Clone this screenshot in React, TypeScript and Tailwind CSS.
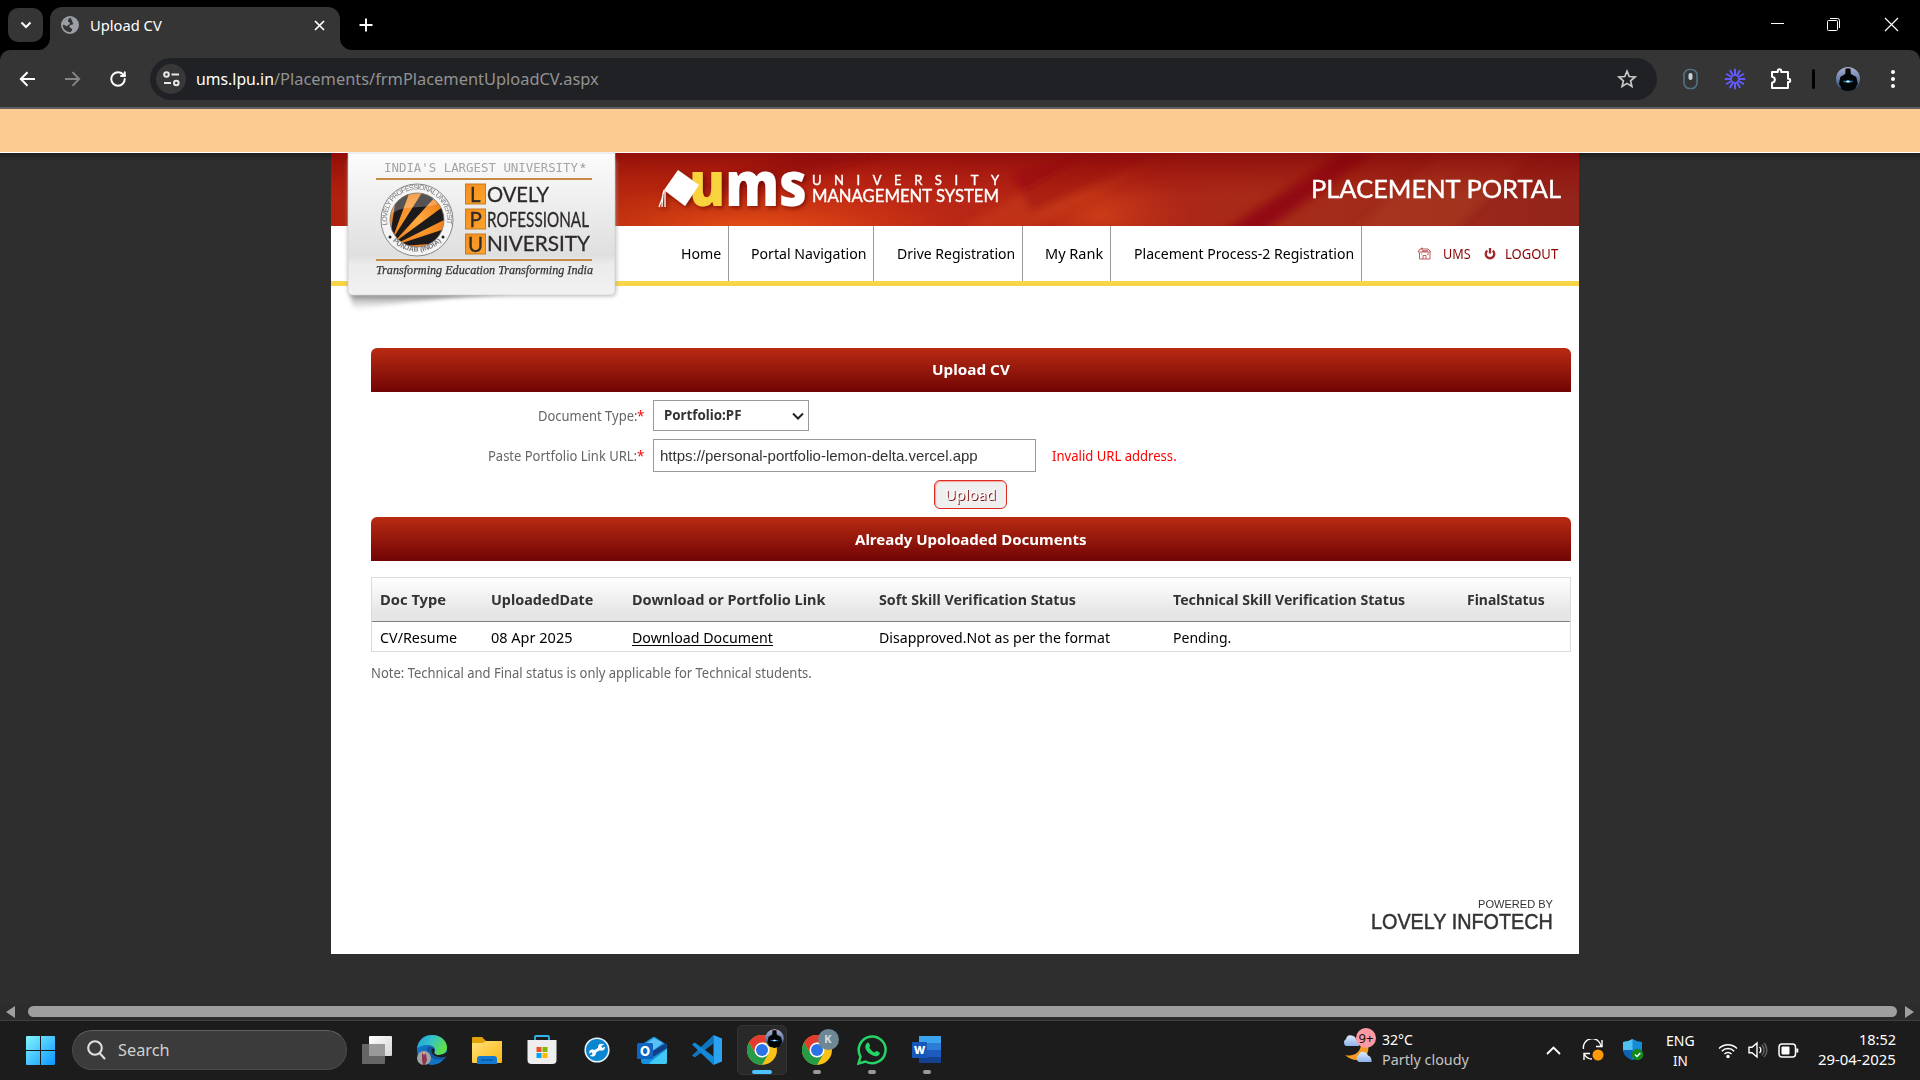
import { useLayoutEffect, useRef, useState } from "react";
import type { ReactNode } from "react";
import { RotateCw } from "lucide-react";

type FitProps = { w: number; className?: string; children: ReactNode };

/* One line of text, condensed or widened to an exact width. */
function Fit({ w, className = "", children }: FitProps) {
  const ref = useRef<HTMLSpanElement>(null);
  const [scale, setScale] = useState(1);
  useLayoutEffect(() => {
    if (ref.current) setScale(w / ref.current.offsetWidth);
  }, [w]);
  return (
    <span className={`block shrink-0 whitespace-nowrap ${className}`} style={{ width: w }}>
      <span ref={ref} className="inline-block origin-left" style={{ transform: `scaleX(${scale})` }}>
        {children}
      </span>
    </span>
  );
}

function Avatar({ size }: { size: number }) {
  return (
    <svg width={size} height={size} viewBox="0 0 24 24">
      <defs>
        <clipPath id="av"><circle cx="12" cy="12" r="12" /></clipPath>
        <linearGradient id="avg" x1="0" y1="0" x2="0" y2="1">
          <stop offset="0" stopColor="#a9b4d4" />
          <stop offset=".5" stopColor="#6a7fa8" />
          <stop offset="1" stopColor="#16406c" />
        </linearGradient>
      </defs>
      <g clipPath="url(#av)">
        <rect width="24" height="24" fill="url(#avg)" />
        <path d="M9.500 1.500h5l.3 5.500 5.500 3 1.500 7-2 3v4H5v-4l-2-3 1.300-7L9.200 7Z" fill="#030507" />
        <path d="M9 2l1 2M15 2l-1 2" stroke="#a33" strokeWidth=".7" />
        <ellipse cx="12" cy="14.500" rx="5" ry="1" fill="#1b7fc4" />
        <ellipse cx="12" cy="14.500" rx="1.800" ry="1" fill="#dff6ff" />
      </g>
    </svg>
  );
}

function TabStrip() {
  return (
    <div className="flex h-[50px] items-start bg-black">
      <div className="ml-2 mt-2 flex h-[34px] w-[35px] items-center justify-center rounded-[10px] bg-[#353535]">
        <svg width="12" height="8" viewBox="0 0 12 8" fill="none" stroke="#fff" strokeWidth="2"><path d="M1.500 1.500 6 6l4.500-4.500" /></svg>
      </div>
      <div className="relative ml-[7px] mt-[7px] flex h-[43px] w-[290px] items-center rounded-t-[12px] bg-[#353535] pb-[7px]">
        <svg className="absolute -left-3 bottom-0" width="12" height="12"><path d="M12 0v12H0A12 12 0 0 0 12 0Z" fill="#353535" /></svg>
        <svg className="absolute -right-3 bottom-0" width="12" height="12"><path d="M0 0v12h12A12 12 0 0 1 0 0Z" fill="#353535" /></svg>
        <svg className="ml-[11px]" width="18" height="18" viewBox="0 0 18 18">
          <circle cx="9" cy="9" r="8.100" fill="#353535" stroke="#9aa0a6" strokeWidth="1.800" />
          <path d="M1 8.500C2 5 5 2 9.500 1.200 8 3 6.500 3.300 7 5.200c.3 1.300 2.200.7 2 2.300-.2 1.500-2 1-2.500 2.200C5.800 11.200 4 8.500 1 8.500Z" fill="#9aa0a6" />
          <path d="M10 2c4 0 7 3 7 7s-2.800 7-7 7.800c-.5-1.600 1.500-2 1.200-3.600-.3-1.400-3-1-2.700-3 .2-1.700 2.600-1 3.500-2 .9-1.200-1-1.600-.7-3C11.500 4 9.500 3.500 10 2Z" fill="#9aa0a6" />
        </svg>
        <Fit w={72} className="ml-[11px] font-['Noto_Sans'] text-[14.5px] leading-5 text-white">Upload CV</Fit>
        <svg className="ml-[152px]" width="11" height="11" viewBox="0 0 11 11" stroke="#fff" strokeWidth="1.700"><path d="m1 1 9 9M10 1l-9 9" /></svg>
      </div>
      <svg className="ml-[19px] mt-[18px]" width="14" height="14" viewBox="0 0 14 14" stroke="#fff" strokeWidth="1.900"><path d="M7 .5v13M.5 7h13" /></svg>
      <div className="ml-auto mr-[21px] mt-[17px] flex items-center text-white">
        <svg width="15" height="15" stroke="#fff" className="mr-[41px]"><path d="M1 6.500h13" /></svg>
        <svg width="15" height="15" stroke="#fff" fill="none" className="mr-[43px]"><rect x="1.500" y="3.500" width="10" height="10" rx="1" /><path d="M4 1.500h7.500a2 2 0 0 1 2 2V11" /></svg>
        <svg width="15" height="15" stroke="#fff" strokeWidth="1.200"><path d="m1 1 13 13M14 1 1 14" /></svg>
      </div>
    </div>
  );
}

const RAYS = [0, 30, 60, 90, 120, 150, 180, 210, 240, 270, 300, 330];

function Toolbar() {
  return (
    <div className="bg-black">
      <div className="flex h-[59px] items-center rounded-t-[10px] border-b-2 border-[#5f5f63] bg-[#353535]">
        <svg className="ml-[19px]" width="17" height="16" viewBox="0 0 17 16" fill="none" stroke="#fff" strokeWidth="2"><path d="M16 8H2.500M8.500 1.200 1.800 8l6.700 6.800" /></svg>
        <svg className="ml-7" width="17" height="16" viewBox="0 0 17 16" fill="none" stroke="#868686" strokeWidth="1.900"><path d="M1 8h13.500M8.500 1.200 15.200 8l-6.700 6.800" /></svg>
        <RotateCw className="ml-[28px] text-white" size={18} strokeWidth={2.600} />
        <div className="ml-[23px] flex h-[42px] w-[1507px] items-center rounded-full bg-[#202124]">
          <div className="ml-[6px] flex h-[30px] w-[30px] items-center justify-center rounded-full bg-[#383838]">
            <svg width="17" height="16" viewBox="0 0 17 16" fill="none" stroke="#e8e8e8" strokeWidth="2">
              <circle cx="3.500" cy="3.500" r="2.300" /><path d="M8.500 3.500H16M1 12H8" /><circle cx="13.300" cy="12" r="2.300" />
            </svg>
          </div>
          <Fit w={78} className="ml-[10px] font-['Noto_Sans'] text-[17px] leading-[30px] text-white">ums.lpu.in</Fit>
          <Fit w={325} className="font-['Noto_Sans'] text-[17px] leading-[30px] text-[#929292]">/Placements/frmPlacementUploadCV.aspx</Fit>
          <svg className="ml-auto mr-5" width="20" height="20" viewBox="0 0 20 20" fill="none" stroke="#c7c7c7" strokeWidth="1.700"><path d="m10 2.200 2.200 5.300 5.800.5-4.400 3.800 1.300 5.600-4.900-3-4.900 3 1.300-5.600L2 8l5.800-.5Z" /></svg>
        </div>
        <svg className="ml-[26px]" width="15" height="22" viewBox="0 0 15 22"><rect x="1" y="1.500" width="13" height="19" rx="5.500" fill="none" stroke="#4f7383" strokeWidth="1.600" /><rect x="5.500" y="5" width="4" height="7" rx="2" fill="#c5d3da" /></svg>
        <svg className="ml-[26px]" width="22" height="22" viewBox="-11 -11 22 22" stroke="#635bff" strokeWidth="2" strokeLinecap="round">
          {RAYS.map((a) => <path key={a} d="M0-4V-9.500" transform={`rotate(${a})`} />)}
          <circle r="4" fill="none" strokeWidth="1.200" />
        </svg>
        <svg className="ml-[23px]" width="23" height="24" viewBox="0 0 23 24" fill="none" stroke="#fff" strokeWidth="2" strokeLinejoin="round"><path d="M3 5h5.800V4a1.700 1.700 0 0 1 3.400 0v1H19v6.800h.6a1.600 1.600 0 0 1 0 3.200H19v6H3v-5.300c3.800-.5 3.800-5.400 0-5.900Z" /></svg>
        <div className="ml-[20px] h-5 w-[3px] rounded bg-black" />
        <div className="ml-[21px]"><Avatar size={24} /></div>
        <svg className="ml-[30px]" width="6" height="20" fill="#fff"><circle cx="3" cy="3" r="2" /><circle cx="3" cy="10" r="2" /><circle cx="3" cy="17" r="2" /></svg>
      </div>
    </div>
  );
}

/* Glossy university seal, slogan and name plate. */
function LogoCard() {
  return (
    <svg width="290" height="162" viewBox="0 0 290 162" className="absolute left-[10px] top-0 z-10 overflow-visible">
      <defs>
        <linearGradient id="card" x1="0" y1="0" x2="0" y2="1">
          <stop offset="0" stopColor="#fdfcfd" /><stop offset=".72" stopColor="#e0dfe0" /><stop offset=".78" stopColor="#ebebeb" /><stop offset="1" stopColor="#f1f1f1" />
        </linearGradient>
        <linearGradient id="shade" x1="0" y1="0" x2="0" y2="1"><stop offset="0" stopColor="#777" /><stop offset="1" stopColor="#ddd" stopOpacity=".2" /></linearGradient>
        <radialGradient id="ball"><stop offset="0" stopColor="#ffae45" /><stop offset="1" stopColor="#ef7911" /></radialGradient>
        <linearGradient id="sq" x1="0" y1="0" x2="1" y2="1"><stop offset="0" stopColor="#f58d1e" /><stop offset="1" stopColor="#fba52b" /></linearGradient>
        <clipPath id="ballc"><circle cx="76" cy="67" r="27" /></clipPath>
        <path id="sealTop" d="M46.500 72A30 30 0 1 1 105.500 72" />
        <path id="sealBot" d="M49 85A33.500 33.500 0 0 0 103 85" />
        <filter id="soft"><feGaussianBlur stdDeviation="2" /></filter>
      </defs>
      <path d="M10 140H170Q60 148 15 157Q10 155 10 140Z" fill="url(#shade)" filter="url(#soft)" />
      <path d="M7 7V138q0 5 5 5H270q5 0 5-5V7Z" fill="#999" opacity=".7" filter="url(#soft)" />
      <path d="M7 0V137q0 5 5 5H269q5 0 5-5V0Z" fill="url(#card)" stroke="#ccc" strokeWidth=".6" />
      <text x="43" y="18.500" fontFamily="DejaVu Sans Mono" fontWeight="200" fontSize="11.500" fill="#a5a5a5" textLength="194" lengthAdjust="spacingAndGlyphs">INDIA'S LARGEST UNIVERSITY</text>
      <text x="239" y="20" fontFamily="Liberation Sans" fontSize="15" fill="#999">*</text>
      <path d="M35 26H251M35 107H251" stroke="#c98a45" strokeWidth="2" />
      <circle cx="76" cy="67" r="36" fill="#f4f4f4" stroke="#888" strokeWidth="1" />
      <g clipPath="url(#ballc)">
        <rect x="45" y="36" width="62" height="62" fill="url(#ball)" />
        <g fill="#1d1a1b">
          <path d="M49 84 56 38h13L52 84Z" />
          <path d="M51 87 82 38l13 5L54 88Z" />
          <path d="M54 89 103 53l4 12L57 90Z" />
          <path d="M58 91 107 75l-7 15L62 93Z" />
        </g>
        <path d="M46 67C60 45 85 62 105 46V36H46Z" fill="#fff" opacity=".25" />
      </g>
      <circle cx="76" cy="67" r="27" fill="none" stroke="#777" strokeWidth=".8" />
      <g fontFamily="Liberation Sans" fill="#777" fontSize="7">
        <text><textPath href="#sealTop" textLength="108">LOVELY PROFESSIONAL UNIVERSITY</textPath></text>
        <text fontWeight="bold"><textPath href="#sealBot" startOffset="4">PUNJAB (INDIA)</textPath></text>
      </g>
      <circle cx="49" cy="84" r="1.500" fill="#222" /><circle cx="102" cy="84" r="1.500" fill="#222" />
      {[31, 56, 81].map((y) => <rect key={y} x="124.500" y={y} width="20" height="20" fill="url(#sq)" stroke="#c77b23" />)}
      <g fontFamily="Lato" fontSize="20.500" fill="#2e2a29" stroke="#2e2a29" strokeWidth=".3">
        <text x="129" y="49">L</text><text x="128.500" y="74">P</text><text x="127" y="98.500">U</text>
        <text x="146" y="49" textLength="62" lengthAdjust="spacingAndGlyphs">OVELY</text>
        <text x="146" y="73.500" textLength="102" lengthAdjust="spacingAndGlyphs">ROFESSIONAL</text>
        <text x="146" y="98" textLength="103" lengthAdjust="spacingAndGlyphs">NIVERSITY</text>
      </g>
      <text x="35" y="121" fontFamily="Liberation Serif" fontStyle="italic" fontSize="13" fill="#333" stroke="#333" strokeWidth=".25" textLength="217" lengthAdjust="spacingAndGlyphs">Transforming Education Transforming India</text>
    </svg>
  );
}

function Banner() {
  return (
    <svg width="1248" height="73" viewBox="0 0 1248 73" className="block overflow-visible">
      <defs>
        <clipPath id="bclip"><rect width="1248" height="73" /></clipPath>
        <linearGradient id="bn"><stop offset="0" stopColor="#b0210e" /><stop offset=".25" stopColor="#b8290f" /><stop offset=".42" stopColor="#c02915" /><stop offset=".6" stopColor="#b02417" /><stop offset=".8" stopColor="#a42c1a" /><stop offset="1" stopColor="#92241b" /></linearGradient>
        <linearGradient id="bd" x1="0" y1="0" x2="0" y2="1"><stop offset="0" stopColor="#7d0206" stopOpacity=".65" /><stop offset=".6" stopColor="#a01008" stopOpacity="0" /></linearGradient>
        <radialGradient id="glow"><stop offset="0" stopColor="#ee5718" stopOpacity=".9" /><stop offset="1" stopColor="#d8430f" stopOpacity="0" /></radialGradient>
        <filter id="bb"><feGaussianBlur stdDeviation="5" /></filter>
        <filter id="ts" x="-10%" y="-10%" width="120%" height="130%"><feDropShadow dx="2" dy="2" stdDeviation="2" floodColor="#500" floodOpacity=".6" /></filter>
      </defs>
      <g clipPath="url(#bclip)">
        <rect width="1248" height="73" fill="url(#bn)" />
        <ellipse cx="420" cy="78" rx="210" ry="46" fill="url(#glow)" />
        <ellipse cx="770" cy="62" rx="90" ry="50" fill="url(#glow)" opacity=".5" />
        <g filter="url(#bb)">
          <path d="M330 40 470 0h90L420 40Z" fill="#980b0c" opacity=".6" />
          <path d="M620 80 760 0h80L690 80Z" fill="#d34a22" opacity=".35" />
          <path d="M890 80 1010 0h34L930 80Z" fill="#8b0716" opacity=".75" />
          <path d="M680 20 760 0h80L700 60Z" fill="#950c0f" opacity=".5" />
          <path d="M1020 80 1110 0h90L1120 80Z" fill="#b04325" opacity=".45" />
        </g>
        <rect width="1248" height="73" fill="url(#bd)" />
      </g>
      <g filter="url(#ts)">
        <text x="358" y="53" fontFamily="Open Sans" fontWeight="800" fontSize="62" fill="#fff" textLength="118" lengthAdjust="spacingAndGlyphs"><tspan fill="#f8d33e">u</tspan>ms</text>
        <path d="m347 17 21 15-14 21-21-16Z" fill="#fff" />
        <path d="m333 37-2 9-3 8M334 38l0 16M332 40l-1 14" stroke="#fff" strokeWidth="1.200" fill="none" />
      </g>
      <g fontFamily="Lato" fill="#fff" stroke="#fff" strokeWidth=".4">
        <text x="481" y="32" fontSize="13" textLength="187">UNIVERSITY</text>
        <text x="481" y="49" fontSize="17" textLength="187" lengthAdjust="spacingAndGlyphs">MANAGEMENT SYSTEM</text>
        <text x="980" y="45" fontSize="24.500" textLength="250" lengthAdjust="spacingAndGlyphs">PLACEMENT PORTAL</text>
      </g>
    </svg>
  );
}

const NAV = [
  { label: "Home", w: 40, box: "w-[48px] ml-[350px]" },
  { label: "Portal Navigation", w: 115, box: "w-[145px]" },
  { label: "Drive Registration", w: 118, box: "w-[149px]" },
  { label: "My Rank", w: 58, box: "w-[88px]" },
  { label: "Placement Process-2 Registration", w: 220, box: "w-[251px]" },
];

function Nav() {
  return (
    <nav className="flex h-[60px] items-stretch border-b-[5px] border-[#f8d648] bg-white font-['Noto_Sans'] text-[14.5px] leading-5 text-black">
      {NAV.map((n) => (
        <div key={n.label} className={`flex items-center justify-end border-r border-[#999] pb-[2px] pr-[7px] ${n.box}`}>
          <Fit w={n.w}>{n.label}</Fit>
        </div>
      ))}
      <div className="ml-[55px] flex items-center text-[#8b0000]">
        <svg width="15" height="13" viewBox="0 0 15 13" fill="none" stroke="#bf5a5e"><path d="M1 5 3 2h8l3 3H1ZM2.500 5.500V12H13V5.500M6 12V8.500h3V12M4 7h1M10 7h2" /><path d="M4 1.500h2M5 4h6" strokeWidth="1.500" /></svg>
        <Fit w={28} className="ml-[11px] text-[14px]">UMS</Fit>
        <svg className="ml-[13px]" width="12" height="12" viewBox="0 0 12 12" fill="none" stroke="#a3282b" strokeWidth="2.300"><path d="M3.300 2.600a4.300 4.300 0 1 0 5.400 0M6 0v5.500" /></svg>
        <Fit w={53} className="ml-[9px] text-[14px]">LOGOUT</Fit>
      </div>
    </nav>
  );
}

function SectionTitle({ w, className = "", children }: FitProps) {
  return (
    <div className={`flex h-11 items-center justify-center rounded-t-[6px] bg-linear-to-b from-[#b92a12] to-[#720406] font-['Noto_Sans'] text-[14.5px] font-bold leading-5 text-white ${className}`}>
      <Fit w={w}>{children}</Fit>
    </div>
  );
}

function UploadForm() {
  return (
    <div className="h-[125px] pt-2 font-['Noto_Sans'] text-[13.5px] leading-5 text-[#666]">
      <div className="flex h-[31px] items-center">
        <Fit w={99} className="ml-[167px]">Document Type:</Fit>
        <Fit w={7} className="text-[#f00]">*</Fit>
        <div className="ml-[9px] flex h-[31px] w-[156px] items-center border border-[#999] bg-white pl-[10px] font-bold text-[#333]">
          <Fit w={77} className="pb-[2px]">Portfolio:PF</Fit>
          <svg className="ml-[51px]" width="12" height="8" viewBox="0 0 12 8" fill="none" stroke="#222" strokeWidth="2"><path d="M1 1.500 6 6.500l5-5" /></svg>
        </div>
      </div>
      <div className="mt-2 flex h-[33px] items-center">
        <Fit w={149} className="ml-[117px]">Paste Portfolio Link URL:</Fit>
        <Fit w={7} className="text-[#f00]">*</Fit>
        <div className="ml-[9px] flex h-[33px] w-[383px] items-center border border-[#999] bg-white pl-[6px] font-['Liberation_Sans'] text-[15px] text-[#333]">
          <Fit w={318}>https://personal-portfolio-lemon-delta.vercel.app</Fit>
        </div>
        <Fit w={125} className="ml-4 text-[#f00]">Invalid URL address.</Fit>
      </div>
      <div className="mt-2 flex justify-center pr-px">
        <button className="flex h-[29px] w-[73px] items-center justify-center rounded-[6px] border border-[#dc2a1e] bg-[#efefef] pb-[2px] text-[15px] leading-5 text-white shadow-[inset_1px_1px_1px_#f5a59e] [text-shadow:1px_1px_0_#7d0a0a]">
          <Fit w={51}>Upload</Fit>
        </button>
      </div>
    </div>
  );
}

function Documents() {
  return (
    <div className="mt-4 border border-[#dcdcdc] font-['Noto_Sans'] text-[14.5px] leading-5 text-black">
      <div className="grid h-[44px] grid-cols-[111px_141px_247px_293.500px_294.500px_1fr] items-center border-b border-[#808080] bg-linear-to-b from-white to-[#e6e6e6] to-80% pb-px pl-2 font-bold text-[#333]">
        <Fit w={66}>Doc Type</Fit>
        <Fit w={102}>UploadedDate</Fit>
        <Fit w={193}>Download or Portfolio Link</Fit>
        <Fit w={197}>Soft Skill Verification Status</Fit>
        <Fit w={232}>Technical Skill Verification Status</Fit>
        <Fit w={78}>FinalStatus</Fit>
      </div>
      <div className="grid h-[29px] grid-cols-[111px_141px_247px_293.500px_294.500px_1fr] items-center bg-white pl-2">
        <Fit w={77}>CV/Resume</Fit>
        <Fit w={81}>08 Apr 2025</Fit>
        <Fit w={141}><u className="underline-offset-2">Download Document</u></Fit>
        <Fit w={231}>Disapproved.Not as per the format</Fit>
        <Fit w={58}>Pending.</Fit>
      </div>
    </div>
  );
}

function Chrome() {
  return (
    <svg width="30" height="30" viewBox="-15 -15 30 30">
      <circle r="15" fill="#fbc116" />
      <path d="M-13-7.500A15 15 0 0 1 13-7.500H0L-6.500 3.750Z" fill="#e33b2e" />
      <path d="M-13-7.500-6.500 3.750Q-3 8 2 7.200L0 15A15 15 0 0 1-13-7.500Z" fill="#269b48" />
      <path d="M6.500 3.750 0 15l-3-8Z" fill="#269b48" />
      <circle r="7.500" fill="#fff" /><circle r="6" fill="#2b74e8" />
    </svg>
  );
}

function Slot({ children, dot = false }: { children: ReactNode; dot?: boolean }) {
  return (
    <div className="relative flex h-[50px] w-[55px] items-center justify-center">
      {children}
      {dot && <span className="absolute bottom-[1px] h-[4px] w-2 rounded-full bg-[#9a9a9a]" />}
    </div>
  );
}

function TaskIcons() {
  return (
    <div className="ml-[2.500px] flex">
      <Slot>
        <svg width="30" height="28" viewBox="0 0 30 28"><defs><linearGradient id="tv" x1="0" y1="0" x2="1" y2="1"><stop offset="0" stopColor="#fff" /><stop offset="1" stopColor="#d5d5d5" /></linearGradient></defs><rect y="8" width="23" height="20" rx="1" fill="#666" /><rect x="7" width="23" height="20" rx="1" fill="url(#tv)" /><path d="M7 8h16v12H7Z" fill="#999" /></svg>
      </Slot>
      <Slot>
        <svg width="30" height="30" viewBox="0 0 30 30">
          <defs>
            <linearGradient id="ed" x1="0" y1="0" x2="1" y2=".4"><stop offset="0" stopColor="#1b9de2" /><stop offset=".5" stopColor="#35c1c8" /><stop offset="1" stopColor="#5fe04a" /></linearGradient>
          </defs>
          <circle cx="15" cy="15" r="15" fill="#1273c4" />
          <path d="M0 14C1 4 8 0 15 0c9 0 15 6 15 12.500 0 5-4 7.500-8.500 7.500-3 0-5-1-4-3 2-3-1-7-6-7C5 10 1 12 0 14Z" fill="url(#ed)" />
          <path d="M10 13c3-3 7-1 7.500 2-1.500 3 .5 5 4 5 3 0 6-1 8-3v4l-2 3c-8 2-18-1-17.500-11Z" fill="#14559c" />
          <path d="M14.500 15c.5-2 3-2 3.200 0-1.500 3 .5 5 4 5 3 0 6-1 8.300-3v4c-7 3-16 0-15.500-6Z" fill="#1c1c1c" />
          <circle cx="7" cy="23" r="7" fill="#a4a5a2" /><path d="M5 18q3-3 4 1l1 6-2 5H6l-1-5Z" fill="#8f3557" /><circle cx="7" cy="18" r="1.600" fill="#d8a28c" />
        </svg>
      </Slot>
      <Slot>
        <svg width="30" height="27" viewBox="0 0 30 27"><defs><linearGradient id="fo" x1="0" y1="0" x2="1" y2="1"><stop offset="0" stopColor="#ffe07a" /><stop offset="1" stopColor="#fbb812" /></linearGradient></defs><path d="M0 1q0-1 1-1h9l4 4h15q1 0 1 1v10H0Z" fill="#dfa008" /><path d="M0 6h11l3-2h16v21q0 1-1 1H1q-1 0-1-1Z" fill="url(#fo)" /><path d="M5 27v-5q0-3 3-3h14q3 0 3 3v5Z" fill="#1379d1" /><path d="M9 23h12" stroke="#0a4a90" /></svg>
      </Slot>
      <Slot>
        <svg width="30" height="30" viewBox="0 0 30 30"><path d="M8 6V2q0-1 1-1h12q1 0 1 1v4" fill="none" stroke="#30b5e8" strokeWidth="1.800" /><path d="M.5 5h29v20q0 4-4 4h-21q-4 0-4-4Z" fill="#eee" /><path d="M9.500 12h5v5h-5Z" fill="#f25022" /><path d="M15.500 12h5v5h-5Z" fill="#7fba00" /><path d="M9.500 18h5v5h-5Z" fill="#00a4ef" /><path d="M15.500 18h5v5h-5Z" fill="#ffb900" /></svg>
      </Slot>
      <Slot>
        <svg width="26" height="26" viewBox="-13 -13 26 26">
          <circle r="11.800" fill="#0a86d1" stroke="#e8f3fa" strokeWidth="1.600" />
          <path d="M-4 2.800 4-2.300" stroke="#fff" strokeWidth="2.800" />
          <circle cx="4.500" cy="-2.800" r="3.400" fill="#fff" /><circle cx="-4.500" cy="3" r="3.400" fill="#fff" />
          <path d="m4.800-3 4.500-2.500M-4.800 3.200l-4.500 2.300" stroke="#0a86d1" strokeWidth="2.200" />
        </svg>
      </Slot>
      <Slot>
        <svg width="30" height="27" viewBox="0 0 30 27"><path d="M4 8 16 0q1-.6 2 0l12 8v17q0 2-2 2H7q-3 0-3-3Z" fill="#1490df" /><path d="M8 7 17 1l9 5-12 9Z" fill="#5bc0f5" /><path d="m14 15 15-9 1 5-14 9Z" fill="#123f86" /><path d="m12 26 18-14v13q0 2-2 2H14Z" fill="#42c8f5" /><rect y="6" width="16" height="16" rx="1.500" fill="#0f63c1" /><text x="8" y="18.500" textAnchor="middle" fontFamily="Inter" fontWeight="800" fontSize="13" fill="#fff">O</text></svg>
      </Slot>
      <Slot>
        <svg width="30" height="30" viewBox="0 0 30 30"><path d="M21.500 8.500 2.800 22.500 0 20.500 21.500 0Z" fill="#0d76bf" /><path d="M21.500 21.500 2.800 7.500 0 9.500 21.500 30Z" fill="#1388d6" /><path d="M21.500 0 30 3.500v23L21.500 30Z" fill="#2aa4f1" /></svg>
      </Slot>
      <div className="relative flex h-[50px] w-[55px] items-center justify-center">
        <span className="absolute inset-y-0 left-[2px] w-[50px] rounded-[5px] border border-[#333] bg-[#292929]" />
        <span className="relative"><Chrome /></span>
        <span className="absolute right-[6px] top-1 overflow-hidden rounded-full"><Avatar size={19} /></span>
        <span className="absolute bottom-[1px] h-1 w-5 rounded-full bg-[#4cc2ff]" />
      </div>
      <Slot dot>
        <Chrome />
        <span className="absolute right-[6px] top-[4px] flex h-[21px] w-[21px] items-center justify-center rounded-full bg-[#6d8794] font-['Noto_Sans'] text-[11px] font-bold text-[#d5dde1]">K</span>
      </Slot>
      <Slot dot>
        <svg width="30" height="30" viewBox="0 0 30 30"><path d="M1.500 28.500 3.500 21.500A13.400 13.400 0 1 1 8.500 26.500Z" fill="none" stroke="#25d366" strokeWidth="2.500" /><path d="M10 8c1-1 2 0 2.500 1.200.8 2 .8 2-.2 3.400 1.500 2.700 3 3.900 5.400 5 1.500-1.700 1.500-2 3-1.200 2.500 1.200 2.300 1.300 1.800 2.900-2 3-5.300 2.300-8.500.3C9.500 17 6 12 10 8Z" fill="#25d366" /></svg>
      </Slot>
      <Slot dot>
        <svg width="30" height="28" viewBox="0 0 30 28"><path d="M7 0h22v7H7Z" fill="#3ca3ef" /><path d="M7 7h22v7H7Z" fill="#2b7dd8" /><path d="M7 14h22v7H7Z" fill="#1c5bc0" /><path d="M7 21h22v6H7Z" fill="#134390" /><rect y="6" width="15" height="16" rx="1" fill="#1657b9" /><text x="7.500" y="18" textAnchor="middle" fontFamily="Inter" fontWeight="800" fontSize="11" fill="#fff">W</text></svg>
      </Slot>
    </div>
  );
}

function Tray() {
  return (
    <div className="ml-auto flex h-[50px] items-center font-['Noto_Sans'] text-[14.5px] leading-5 text-white">
      <svg width="35" height="36" viewBox="0 0 35 36" className="mb-2">
        <defs><linearGradient id="cl" x1="0" y1="0" x2="0" y2="1"><stop offset="0" stopColor="#dcecff" /><stop offset="1" stopColor="#8fb2ea" /></linearGradient></defs>
        <path d="M26 17c3 12-11 21-23 10 8 2 15-2 16-10Z" fill="#f59a23" />
        <path d="M4 18a4 4 0 0 1 0-7q1-5 6-3.500 4 1 4 4 4 1 3 6.500Z" fill="url(#cl)" />
        <path d="M17 34a4 4 0 0 1-.5-7q2-5 7-2.500 2 1 2.500 3 4 1 3.500 6.500Z" fill="url(#cl)" />
        <circle cx="24" cy="10" r="10" fill="#ff99a4" />
        <text x="24" y="14.500" textAnchor="middle" fontFamily="Noto Sans" fontSize="13" fill="#111">9+</text>
      </svg>
      <div className="mb-[3px] ml-[5px]"><Fit w={31}>32°C</Fit><Fit w={87} className="text-[#c4c4c4]">Partly cloudy</Fit></div>
      <svg className="ml-[77px]" width="15" height="9" viewBox="0 0 15 9" fill="none" stroke="#fff" strokeWidth="1.900"><path d="m1 8 6.500-6.500L14 8" /></svg>
      <svg className="ml-[21px]" width="22" height="22" viewBox="0 0 22 22" fill="none" stroke="#fff" strokeWidth="1.400"><path d="M1.500 10A8.800 8.800 0 0 1 19 7M20 1v6.500h-6M2 21v-6.500h6M2.500 15.500Q5 20 10 20" /><circle cx="16" cy="16" r="5.500" fill="#ff9a0b" stroke="none" /></svg>
      <svg className="ml-[19px]" width="21" height="22" viewBox="0 0 21 22"><path d="M9.500 0Q13 2.500 19 3V10c0 5-4 9-9.500 11C4 19 0 15 0 10V3Q6 2.500 9.500 0Z" fill="#168bd8" /><path d="M9.500 0Q6 2.500 0 3V11h9.500Z" fill="#4fc0f2" /><path d="M0 11h9.500v10C4 19 .5 15 0 11Z" fill="#0d63b5" /><circle cx="14.500" cy="15.500" r="5.800" fill="#15881b" /><path d="m12 15.500 2 2 3.300-3.500" fill="none" stroke="#fff" strokeWidth="1.400" /></svg>
      <div className="mb-[1px] ml-[22px] flex w-7 flex-col items-center"><Fit w={29}>ENG</Fit><Fit w={15}>IN</Fit></div>
      <svg className="ml-[24px]" width="20" height="17" viewBox="0 0 20 17" fill="none" stroke="#fff" strokeWidth="1.500"><path d="M1 6.500a12.500 12.500 0 0 1 18 0M3.800 9.300a8.500 8.500 0 0 1 12.400 0M6.500 12.100a4.800 4.800 0 0 1 7 0" /><circle cx="10" cy="14.500" r="1.700" fill="#fff" stroke="none" /></svg>
      <svg className="ml-[10px]" width="20" height="18" viewBox="0 0 20 18" fill="none" stroke="#fff" strokeWidth="1.400"><path d="M1 6.300h3L9 2v14l-5-4.300H1ZM11.500 6a4 4 0 0 1 0 6" /><path d="M13.800 3.800a7 7 0 0 1 0 10.400M16 2a10 10 0 0 1 0 14" stroke="#666" /></svg>
      <svg className="ml-[10px]" width="21" height="15" viewBox="0 0 21 15" fill="none" stroke="#fff" strokeWidth="1.500"><rect x="1" y="1" width="16.500" height="13" rx="3" /><rect x="3.500" y="3.500" width="8" height="8" rx="1" fill="#fff" stroke="none" /><path d="M19.300 5.500v4" strokeWidth="2" /></svg>
      <div className="mb-[3px] ml-[19px] mr-6 flex flex-col items-end"><Fit w={37}>18:52</Fit><Fit w={78}>29-04-2025</Fit></div>
    </div>
  );
}

function Taskbar() {
  return (
    <div className="flex h-[60px] items-center border-t border-[#404040] bg-[#1c1c1c] pb-px">
      <svg className="ml-[26px]" width="29" height="29" viewBox="0 0 29 29"><defs><linearGradient id="win" x1="0" y1="0" x2="29" y2="29" gradientUnits="userSpaceOnUse"><stop offset="0" stopColor="#84f6ff" /><stop offset="1" stopColor="#0a95ff" /></linearGradient></defs><path d="M1 0h13v14H0V1q0-1 1-1ZM15 0h13q1 0 1 1v13H15ZM0 15h14v14H1q-1 0-1-1ZM15 15h14v13q0 1-1 1H15Z" fill="url(#win)" /></svg>
      <div className="ml-[17px] flex h-10 w-[275px] items-center rounded-full border border-[#4b4b4b] border-t-[#606060] bg-[#3b3b3b]">
        <svg className="ml-[14px]" width="19" height="20" viewBox="0 0 19 20" fill="none" stroke="#e0e0e0" strokeWidth="2.100" strokeLinecap="round"><circle cx="8" cy="8" r="6.800" /><path d="m13 13.500 4.500 5" /></svg>
        <Fit w={52} className="ml-[12px] font-['Noto_Sans'] text-[16px] leading-6 text-[#d0d0d0]">Search</Fit>
      </div>
      <TaskIcons />
      <Tray />
    </div>
  );
}

export default function App() {
  return (
    <div className="flex h-[1080px] w-[1920px] flex-col overflow-hidden bg-[#2e2e2e]">
      <TabStrip />
      <Toolbar />
      <div className="h-11 border-b border-white bg-[#fccb92]" />
      <main className="h-[851px] bg-linear-to-b from-[#1f1f1f] to-[#2e2e2e] to-[8px] pl-[331px]">
        <div className="relative flex h-[801px] w-[1248px] flex-col bg-white">
          <LogoCard />
          <Banner />
          <Nav />
          <section className="ml-10 mt-[62px] w-[1200px]">
            <SectionTitle w={78} className="pb-[2px]">Upload CV</SectionTitle>
            <UploadForm />
            <SectionTitle w={232}>Already Upoloaded Documents</SectionTitle>
            <Documents />
            <Fit w={441} className="mt-[11px] font-['Noto_Sans'] text-[13.5px] leading-5 text-[#666]">Note: Technical and Final status is only applicable for Technical students.</Fit>
          </section>
          <footer className="mb-[21px] mr-[26px] mt-auto flex flex-col items-end font-['Liberation_Sans'] text-[#333]">
            <Fit w={75} className="text-[11.5px] leading-[12px]">POWERED BY</Fit>
            <Fit w={182} className="text-[22.5px] leading-[23px] [-webkit-text-stroke:0.5px_#333]">LOVELY INFOTECH</Fit>
          </footer>
        </div>
      </main>
      <div className="flex h-4 items-center bg-[#2c2c2c] pb-px">
        <svg className="ml-[6px]" width="9" height="12"><path d="M9 0v12L0 6Z" fill="#9f9f9f" /></svg>
        <div className="ml-[13px] h-[11px] w-[1869px] rounded-full bg-[#9f9f9f]" />
        <svg className="ml-2" width="9" height="12"><path d="M0 0v12l9-6Z" fill="#9f9f9f" /></svg>
      </div>
      <Taskbar />
    </div>
  );
}
